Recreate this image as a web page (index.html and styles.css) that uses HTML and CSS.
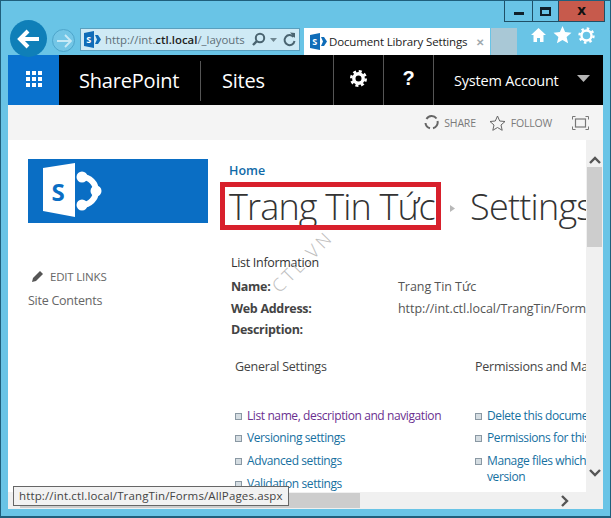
FILE: index.html
```html
<!DOCTYPE html>
<html lang="en">
<head>
<meta charset="utf-8">
<title>Document Library Settings</title>
<link rel="stylesheet" href="styles.css">
</head>
<body>
<div class="window">
  <header class="chrome">
    <div class="caption">
      <span class="cap-btn cap-min"><i class="min-glyph"></i></span>
      <span class="cap-btn cap-max"><i class="max-glyph"></i></span>
      <span class="cap-btn cap-close">x</span>
    </div>
    <div class="navrow">
      <span class="back">
        <svg width="24" height="20" viewBox="0 0 24 20"><path d="M11 2 3 10l8 8M3.500 10H22" fill="none" stroke="#fff" stroke-width="4"/></svg>
      </span>
      <span class="forward">
        <svg width="16" height="14" viewBox="0 0 16 14"><path d="M9 1l6 6-6 6M15 7H1" fill="none" stroke="#c8eaf6" stroke-width="1.800"/></svg>
      </span>
      <div class="address">
        <svg class="sp-small" width="17" height="17" viewBox="0 0 17 17"><use href="#sp"/></svg>
        <span class="url">http://int.<b>ctl.local</b>/_layouts</span>
        <svg class="addr-icon" width="15" height="15" viewBox="0 0 15 15"><circle cx="9" cy="6" r="4.200" fill="none" stroke="#4a6470" stroke-width="2"/><path d="M6 9l-4 4" stroke="#4a6470" stroke-width="2.400"/></svg>
        <svg class="addr-icon caret" width="7" height="4" viewBox="0 0 7 4"><path d="M0 0h7L3.500 4z" fill="#6f8791"/></svg>
        <svg class="addr-icon refresh" width="13" height="15" viewBox="0 0 13 15"><path d="M10.500 5A5 5 0 1 0 11.500 9" fill="none" stroke="#4a6470" stroke-width="2"/><path d="M7 .5 12 1v5z" fill="#4a6470"/></svg>
      </div>
      <div class="tab">
        <svg class="sp-small" width="17" height="17" viewBox="0 0 17 17"><use href="#sp"/></svg>
        <span class="tab-title">Document Library Settings</span>
        <span class="tab-x">✕</span>
      </div>
      <div class="newtab"></div>
      <div class="tools">
        <svg width="17" height="16" viewBox="0 0 17 16"><path d="M8.500 1 1 8h2.500v7h3.500v-4h3v4h3.500V8H16z" fill="#fff"/></svg>
        <svg width="19" height="18" viewBox="0 0 19 18"><path d="M9.500 0l2.600 6.100 6.400.6-4.900 4.200 1.500 6.400-5.600-3.400-5.600 3.400 1.500-6.400L.5 6.700l6.400-.6z" fill="#fff"/></svg>
        <svg width="17" height="17" viewBox="0 0 17 17"><circle cx="8.500" cy="8.500" r="5" fill="none" stroke="#fff" stroke-width="2.400"/><circle cx="8.500" cy="8.500" r="7" fill="none" stroke="#fff" stroke-width="2.400" stroke-dasharray="2.500 3"/></svg>
      </div>
    </div>
  </header>

  <nav class="suitebar">
    <span class="waffle">
      <svg width="16" height="16" viewBox="0 0 16 16" fill="#fff"><rect width="4" height="4"/><rect x="6" width="4" height="4"/><rect x="12" width="4" height="4"/><rect y="6" width="4" height="4"/><rect x="6" y="6" width="4" height="4"/><rect x="12" y="6" width="4" height="4"/><rect y="12" width="4" height="4"/><rect x="6" y="12" width="4" height="4"/><rect x="12" y="12" width="4" height="4"/></svg>
    </span>
    <span class="brand">SharePoint</span>
    <span class="sites">Sites</span>
    <span class="suite-icon">
      <svg width="17" height="17" viewBox="0 0 17 17"><circle cx="8.500" cy="8.500" r="4.700" fill="none" stroke="#fff" stroke-width="3.400"/><circle cx="8.500" cy="8.500" r="7.200" fill="none" stroke="#fff" stroke-width="2.600" stroke-dasharray="3 2.660"/></svg>
    </span>
    <span class="suite-icon help">?</span>
    <span class="account">System Account</span>
    <svg class="acct-caret" width="13" height="7" viewBox="0 0 13 7"><path d="M0 0h13L6.500 7z" fill="#b5b5b5"/></svg>
  </nav>

  <div class="actions">
    <span class="action">
      <svg width="15" height="15" viewBox="0 0 15 15"><path d="M2.500 4A6 6 0 0 1 12.500 3.500M13.500 6A6 6 0 0 1 9 13.300M6 13.300A6 6 0 0 1 1.500 8" fill="none" stroke="#666" stroke-width="2"/></svg>
      SHARE
    </span>
    <span class="action">
      <svg width="17" height="16" viewBox="0 0 17 16"><path d="M8.500 1l2.200 5 5.300.5-4 3.500 1.200 5.300-4.700-2.800-4.700 2.800L5 10 1 6.500 6.300 6z" fill="none" stroke="#666"/></svg>
      FOLLOW
    </span>
    <svg class="focus" width="17" height="14" viewBox="0 0 17 14"><path d="M.5 3.500v-3h3M13.500.5h3v3M16.500 10.500v3h-3M3.500 13.500h-3v-3" fill="none" stroke="#777"/><rect x="3.500" y="3" width="10" height="8" fill="none" stroke="#777" stroke-width="1.200"/></svg>
  </div>

  <div class="viewport">
    <div class="page">
      <aside class="leftnav">
        <div class="logo">
          <svg width="60" height="60" viewBox="0 0 60 60"><use href="#splogo"/></svg>
        </div>
        <div class="edit-links">
          <svg width="13" height="13" viewBox="0 0 13 13"><path d="M1 12l1-4 7-7 3 3-7 7z" fill="#555"/></svg>
          EDIT LINKS
        </div>
        <a class="site-contents">Site Contents</a>
      </aside>
      <main class="main">
        <a class="home">Home</a>
        <div class="titlerow">
          <h1 class="list-title">Trang Tin Tức</h1>
          <svg class="crumb" width="5" height="7" viewBox="0 0 5 7"><path d="M0 0l5 3.500L0 7z" fill="#b8b8b8"/></svg>
          <span class="settings-title">Settings</span>
        </div>
        <div class="info-head">List Information</div>
        <dl class="info">
          <dt>Name:</dt><dd>Trang Tin Tức</dd>
          <dt>Web Address:</dt><dd>http://int.ctl.local/TrangTin/Forms/AllPages.aspx</dd>
          <dt>Description:</dt><dd></dd>
        </dl>
        <div class="columns">
          <section class="col col-general">
            <h2 class="col-head">General Settings</h2>
            <ul class="links">
              <li class="visited">List name, description and navigation</li>
              <li>Versioning settings</li>
              <li>Advanced settings</li>
              <li>Validation settings</li>
            </ul>
          </section>
          <section class="col">
            <h2 class="col-head">Permissions and Management</h2>
            <ul class="links">
              <li>Delete this document library</li>
              <li>Permissions for this document library</li>
              <li>Manage files which have no checked in version</li>
            </ul>
          </section>
        </div>
      </main>
    </div>
    <div class="vscroll">
      <svg class="arrow" width="12" height="8" viewBox="0 0 12 8"><path d="M1 7l5-5 5 5" fill="none" stroke="#555" stroke-width="2.400"/></svg>
      <div class="vthumb"></div>
      <div class="vspace"></div>
      <svg class="arrow" width="12" height="8" viewBox="0 0 12 8"><path d="M1 1l5 5 5-5" fill="none" stroke="#555" stroke-width="2.400"/></svg>
    </div>
  </div>

  <div class="hscroll">
    <div class="hthumb"></div>
    <svg width="8" height="12" viewBox="0 0 8 12"><path d="M1 1l5 5-5 5" fill="none" stroke="#555" stroke-width="2.400"/></svg>
  </div>

  <div class="watermark">CTL.VN</div>
  <div class="status-tip">http://int.ctl.local/TrangTin/Forms/AllPages.aspx</div>
  <div class="highlight"></div>
</div>

<svg class="defs" width="0" height="0">
  <defs>
    <g id="sp">
      <path d="M0 2 10 0v17L0 15z" fill="#0f6cb8"/>
      <path d="M11 4l3 0 3 4.500-3 4.500-3 0 2-4.500z" fill="#0f6cb8"/>
      <text x="2.300" y="12" font-family="Open Sans" font-size="9" font-weight="700" fill="#fff">S</text>
    </g>
    <g id="splogo">
      <path d="M0 7 32 2V56L0 50z" fill="#fff"/>
      <text x="8.500" y="40" font-family="Open Sans" font-size="24" font-weight="700" fill="#0a6ec4">S</text>
      <path d="M39 16A14 14 0 0 1 39 44" fill="none" stroke="#fff" stroke-width="6"/>
      <circle cx="39" cy="16" r="5.500" fill="#fff"/>
      <circle cx="53" cy="30" r="5.500" fill="#fff"/>
      <circle cx="39" cy="44" r="5.500" fill="#fff"/>
    </g>
  </defs>
</svg>
</body>
</html>
```

FILE: styles.css
```css
* { box-sizing: border-box; }
html, body { margin: 0; padding: 0; }
body { width: 611px; height: 518px; overflow: hidden; font-family: "Open Sans", "Noto Sans", sans-serif; }

.window {
  position: relative;
  width: 611px;
  height: 518px;
  padding: 0 7px 7px;
  background: #69c4e6;
  border: 1px solid #1f5f7c;
  border-width: 1px 1px 2px 1px;
  display: flex;
  flex-direction: column;
  overflow: hidden;
}

.chrome { height: 54px; flex: none; margin: 0 -7px; position: relative; }

.caption { position: absolute; top: 0; right: 5px; display: flex; height: 21px; border: 1px solid #1f4f66; border-top: 0; }
.cap-btn { display: flex; align-items: center; justify-content: center; height: 20px; }
.cap-min { width: 28px; border-right: 1px solid #1f4f66; }
.cap-max { width: 26px; border-right: 1px solid #1f4f66; }
.cap-close { width: 45px; background: #c75a4c; color: #111; font-size: 15px; font-weight: 700; line-height: 18px; padding-bottom: 4px; }
.min-glyph { width: 10px; height: 3px; margin-top: 4px; background: #10202a; }
.max-glyph { width: 11px; height: 9px; border: 2px solid #10202a; border-top-width: 3px; }

.navrow { position: absolute; left: 9px; right: 0; top: 20px; height: 34px; display: flex; align-items: flex-end; }
.back { width: 37px; height: 37px; margin-bottom: -2px; border-radius: 50%; background: #0f7fb8; display: flex; align-items: center; justify-content: center; flex: none; position: relative; z-index: 2; }
.forward { width: 23px; height: 23px; margin: 0 5px 3px 5px; border-radius: 50%; background: #73c6e6; border: 1px solid #4da5cb; display: flex; align-items: center; justify-content: center; flex: none; }
.address { width: 220px; height: 23px; margin-bottom: 4px; background: #cfeaf5; border: 1px solid #5a9fbe; display: flex; align-items: center; padding: 0 3px; flex: none; }
.sp-small { flex: none; }
.url { font-size: 11.400px; color: #5e6f78; margin-left: 4px; width: 146px; white-space: nowrap; overflow: hidden; }
.url b { font-weight: 600; color: #222; }
.addr-icon { margin-left: 3px; flex: none; }
.caret { margin-left: 4px; }
.refresh { margin-left: 6px; }
.tab { width: 186px; height: 27px; margin-left: 4px; background: #fff; display: flex; align-items: center; padding: 0 6px; flex: none; }
.tab-title { font-size: 11.500px; color: #222; margin-left: 2px; white-space: nowrap; letter-spacing: -0.150px; }
.tab-x { margin-left: auto; font-size: 10px; color: #9fa9ae; font-weight: 700; }
.newtab { width: 26px; height: 27px; margin-left: 1px; background: #a9c8d6; flex: none; }
.tools { display: flex; align-items: center; gap: 6px; margin: 0 0 11px 13px; }

.suitebar { height: 50px; flex: none; background: #000; display: flex; align-items: center; color: #fff; position: relative; }
.waffle { width: 51px; height: 50px; background: #0972ce; display: flex; align-items: center; justify-content: center; flex: none; padding-bottom: 2px; }
.brand { width: 142px; height: 40px; margin-top: 2px; padding-left: 20px; font-size: 20px; line-height: 40px; border-right: 1px solid #555; flex: none; letter-spacing: -0.200px; }
.sites { padding-left: 21px; font-size: 20px; line-height: 40px; margin-top: 2px; flex: none; width: 132px; letter-spacing: -0.200px; }
.suite-icon { width: 50px; height: 50px; border-left: 1px solid #555; display: flex; align-items: center; justify-content: center; font-size: 20px; font-weight: 700; flex: none; padding-bottom: 4px; }
.account { border-left: 1px solid #555; height: 50px; width: 176px; padding-left: 20px; line-height: 52px; font-size: 14.500px; flex: none; letter-spacing: -0.200px; }
.help { font-family: "Liberation Sans", sans-serif; }
.acct-caret { position: absolute; right: 13px; top: 20px; }

.actions { height: 35px; flex: none; background: #f4f4f4; display: flex; align-items: center; justify-content: flex-end; padding: 0 14px 0 0; gap: 13px; }
.action { display: flex; align-items: center; gap: 5px; font-size: 10.500px; color: #7a7a7a; letter-spacing: -0.200px; }
.focus { margin-left: 7px; }

.viewport { flex: 1; min-height: 0; display: flex; background: #fff; overflow: hidden; }
.page { flex: 1; min-width: 0; display: flex; overflow: hidden; }
.leftnav { width: 220px; flex: none; padding: 19px 0 0 20px; }
.logo { width: 180px; height: 64px; background: #0a6ec4; padding: 0 0 0 15px; display: flex; align-items: center; }
.edit-links { margin-top: 46px; display: flex; align-items: center; gap: 6px; font-size: 11.500px; color: #666; padding-left: 3px; letter-spacing: -0.200px; }
.site-contents { display: block; margin-top: 8px; font-size: 12.500px; color: #666; letter-spacing: -0.250px; }

.main { flex: 1; min-width: 0; padding: 23px 0 0 1px; white-space: nowrap; }
.home { display: block; font-size: 12.500px; font-weight: 600; line-height: 16px; color: #0f6aa8; }
.titlerow { display: flex; align-items: center; height: 44px; margin-top: 6px; }
.list-title { margin: 0; width: 221px; flex: none; font-size: 36px; font-weight: 300; line-height: 44px; color: #333; letter-spacing: -0.850px; font-family: "Open Sans", sans-serif; }
.crumb { flex: none; margin: 2px 0 0 0; }
.settings-title { margin-left: 15px; font-size: 36px; font-weight: 300; line-height: 44px; color: #333; letter-spacing: -0.750px; }
.info-head { margin-top: 24px; padding-left: 2px; font-size: 12.500px; line-height: 20px; color: #333; letter-spacing: -0.300px; }
.info { margin: 3px 0 0; padding-left: 2px; display: grid; grid-template-columns: 167px 1fr; grid-auto-rows: 21.500px; align-items: center; font-size: 12.500px; }
.info dt { font-weight: 700; color: #444; letter-spacing: -0.300px; }
.info dd { margin: 0; color: #555; letter-spacing: -0.050px; }

.columns { display: flex; margin-top: 16px; padding-left: 6px; }
.col { flex: none; }
.col-general { width: 240px; }
.col-head { margin: 0; font-size: 12.500px; font-weight: 400; line-height: 20px; color: #444; letter-spacing: -0.250px; }
.links { list-style: none; margin: 31px 0 0; padding: 0; width: 240px; }
.links li { position: relative; padding-left: 12px; font-size: 12px; line-height: 16px; margin-bottom: 6.800px; color: #16709f; letter-spacing: -0.400px; white-space: normal; }
.links li::before { content: ""; position: absolute; left: 0; top: 5px; width: 5px; height: 5px; background: #d5dde2; border: 1px solid #8a98a3; }
.links li.visited { color: #6a2f8f; }
.col:last-child .links { width: 250px; }

.vscroll { width: 17px; flex: none; margin-left: 0; background: #f0f0f0; display: flex; flex-direction: column; align-items: center; padding: 16px 0 0; }
.vthumb { width: 15px; height: 80px; margin-top: 3px; background: #cdcdcd; }
.vspace { flex: 1; }
.arrow { flex: none; margin-bottom: 15px; }
.arrow:first-child { margin-bottom: 0; }

.hscroll { height: 17px; flex: none; background: #f0f0f0; display: flex; align-items: center; padding-right: 34px; justify-content: space-between; }
.hthumb { width: 340px; height: 15px; background: #cdcdcd; margin-left: 12px; }

.watermark { position: absolute; left: 262px; top: 248px; font-size: 18px; font-weight: 300; color: #bdbdbd; transform: rotate(-45deg); letter-spacing: 3.500px; }
.status-tip { position: absolute; left: 12px; top: 485px; height: 20px; padding: 0 5px; background: #f2f2f2; border: 1px solid #666; font-size: 11.500px; line-height: 18px; color: #444; white-space: nowrap; letter-spacing: 0.140px; }
.highlight { position: absolute; left: 219px; top: 181px; width: 221px; height: 48px; border: 5px solid #d8202c; }
.defs { position: absolute; }
```
